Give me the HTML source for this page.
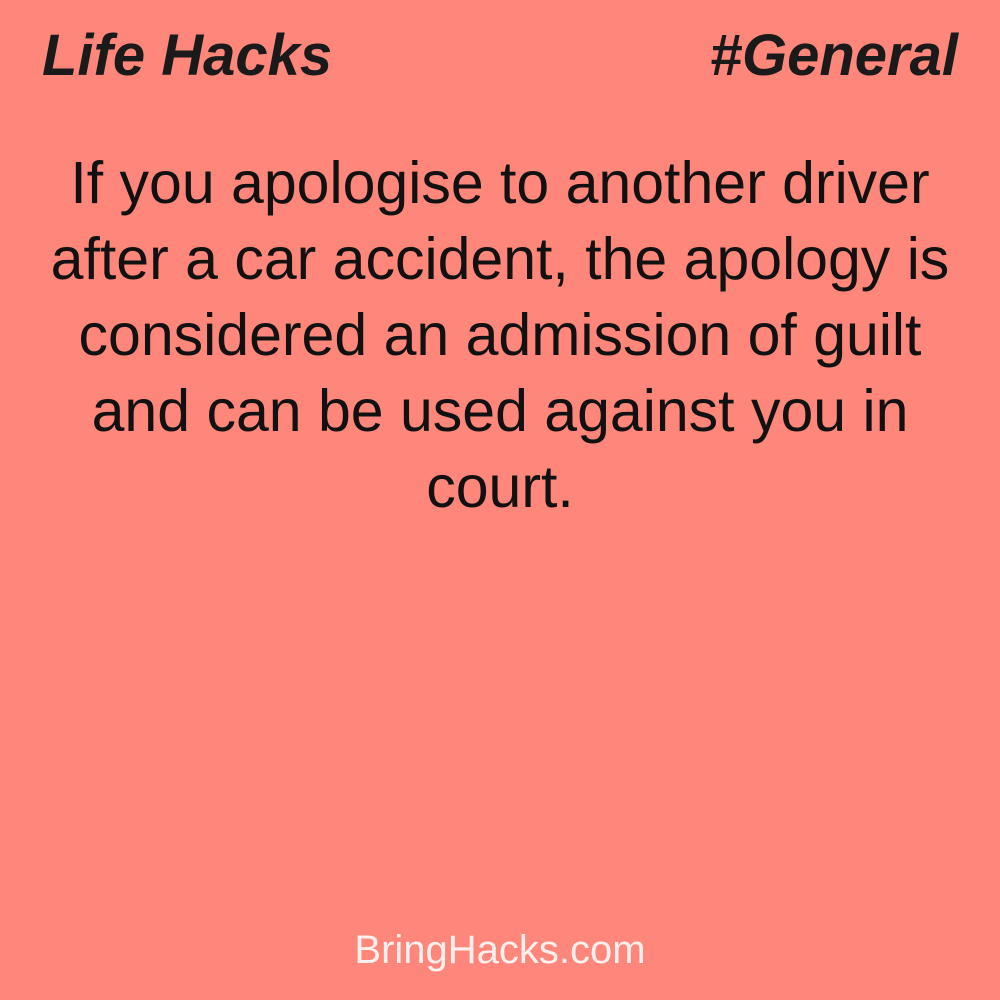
<!DOCTYPE html>
<html><head><style>
html,body{margin:0;padding:0;}
body{width:1000px;height:1000px;background:#ff867a;position:relative;overflow:hidden;font-family:"Liberation Sans",sans-serif;}
.h{position:absolute;top:22px;font-size:58px;font-weight:bold;font-style:italic;color:#1a1a1a;}
.main{position:absolute;left:0;width:1000px;top:145px;text-align:center;font-size:59px;line-height:76px;color:#111;}
.foot{position:absolute;top:928px;width:1000px;text-align:center;font-size:40px;color:#fff0ee;}
</style></head><body>
<div class="h" style="left:42px">Life Hacks</div>
<div class="h" style="right:42px">#General</div>
<div class="main">If you apologise to another driver<br>after a car accident, the apology is<br>considered an admission of guilt<br>and can be used against you in<br>court.</div>
<div class="foot">BringHacks.com</div>
</body></html>
